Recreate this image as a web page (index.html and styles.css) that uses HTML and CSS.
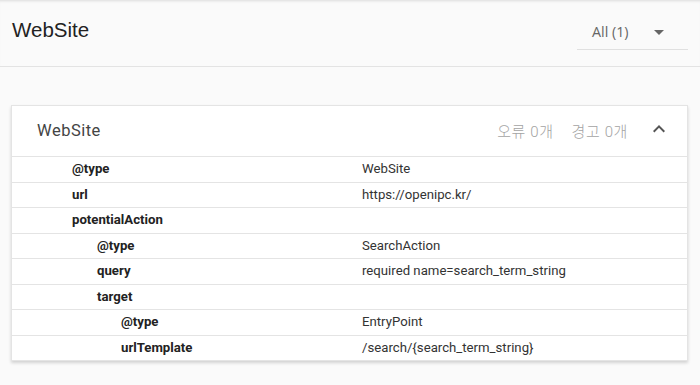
FILE: index.html
```html
<!DOCTYPE html>
<html lang="ko">
<head>
    <meta charset="UTF-8">
    <meta name="viewport" content="width=device-width, initial-scale=1.0">
    <title>WebSite - 구조화된 데이터</title>
    <link rel="stylesheet" href="styles.css">
</head>
<body>
    <header class="top-bar">
        <h1 class="page-title">WebSite</h1>
        <div class="filter-select">
            <span>All (1)</span>
            <svg class="drop-icon" viewBox="0 0 24 24" width="24" height="24"><path d="M7 10l5 5 5-5z"/></svg>
        </div>
    </header>

    <section class="result-card">
        <div class="card-head">
            <h2 class="card-title">WebSite</h2>
            <div class="card-stats">
                <span>오류 0개</span>
                <span>경고 0개</span>
                <svg class="collapse-icon" viewBox="0 0 24 24" width="24" height="24"><path d="M12 8l-6 6 1.41 1.41L12 10.83l4.59 4.58L18 14z"/></svg>
            </div>
        </div>

        <div class="prop-row">
            <div class="prop-key">@type</div>
            <div class="prop-value">WebSite</div>
        </div>
        <div class="prop-row">
            <div class="prop-key">url</div>
            <div class="prop-value">https://openipc.kr/</div>
        </div>
        <div class="prop-row">
            <div class="prop-key">potentialAction</div>
            <div class="prop-value"></div>
        </div>
        <div class="prop-row">
            <div class="prop-key depth-1">@type</div>
            <div class="prop-value">SearchAction</div>
        </div>
        <div class="prop-row">
            <div class="prop-key depth-1">query</div>
            <div class="prop-value">required name=search_term_string</div>
        </div>
        <div class="prop-row">
            <div class="prop-key depth-1">target</div>
            <div class="prop-value"></div>
        </div>
        <div class="prop-row">
            <div class="prop-key depth-2">@type</div>
            <div class="prop-value">EntryPoint</div>
        </div>
        <div class="prop-row">
            <div class="prop-key depth-2">urlTemplate</div>
            <div class="prop-value">/search/{search_term_string}</div>
        </div>
    </section>
</body>
</html>
```

FILE: styles.css
```css
* {
    margin: 0;
    padding: 0;
    box-sizing: border-box;
}

body {
    font-family: Roboto, 'Noto Sans CJK KR', sans-serif;
    background-color: #fafafa;
    min-height: 100vh;
}

.top-bar {
    height: 67px;
    display: flex;
    align-items: center;
    justify-content: space-between;
    padding: 0 12px 6px 12px;
    border-bottom: 1px solid #e3e3e3;
    box-shadow: inset 0 3px 3px -2px rgba(0,0,0,0.12);
}

.page-title {
    font-family: 'Liberation Sans', Arial, sans-serif;
    font-size: 20.5px;
    font-weight: normal;
    color: #222;
}

.filter-select {
    width: 111px;
    height: 36px;
    margin-top: 4px;
    display: flex;
    align-items: center;
    justify-content: space-between;
    padding: 0 17px 0 15px;
    border-bottom: 1px solid #e0e0e0;
    font-family: 'Open Sans', sans-serif;
    font-size: 14.3px;
    color: #666;
}

.drop-icon {
    fill: #666;
}

.result-card {
    margin: 38px 12px 0 11px;
    background: #fff;
    border: 1px solid #e4e4e4;
    border-bottom: none;
    box-shadow: 0 2px 3px rgba(0,0,0,0.16);
}

.card-head {
    height: 51px;
    display: flex;
    align-items: center;
    justify-content: space-between;
    padding: 0 16px 2px 25px;
    border-bottom: 1px solid #e4e4e4;
}

.card-title {
    font-size: 16.5px;
    font-weight: normal;
    color: #444;
    letter-spacing: 0.5px;
}

.card-stats {
    display: flex;
    align-items: center;
    gap: 18px;
    font-size: 15px;
    font-weight: 300;
    letter-spacing: 0.6px;
    color: #a3a3a3;
}

.collapse-icon {
    fill: #555;
    margin-left: 1px;
    margin-top: -3px;
}

.prop-row {
    display: grid;
    grid-template-columns: 350px 1fr;
    height: 25.5px;
    align-items: center;
    border-bottom: 1px solid #e4e4e4;
    font-size: 13.2px;
    padding-bottom: 1px;
}

.prop-key {
    padding-left: 60px;
    font-weight: bold;
    color: #222;
}

.prop-key.depth-1 {
    padding-left: 85px;
}

.prop-key.depth-2 {
    padding-left: 109px;
}

.prop-value {
    color: #333;
}
```
